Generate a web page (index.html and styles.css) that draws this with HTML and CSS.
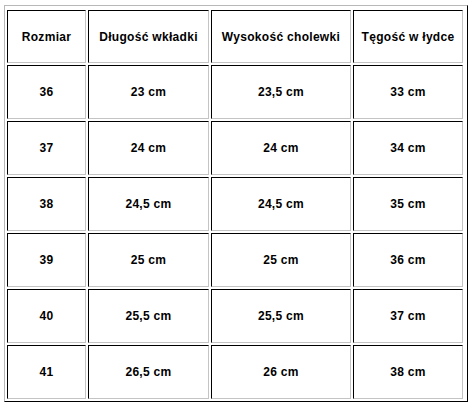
FILE: index.html
```html
<!DOCTYPE html>
<html lang="pl">
<head>
<meta charset="utf-8">
<title>Tabela rozmiarów</title>
<link rel="stylesheet" href="styles.css">
</head>
<body>
<table class="size-table">
  <thead>
    <tr class="head-row">
      <th class="c1">Rozmiar</th>
      <th class="c2">Długość wkładki</th>
      <th class="c3">Wysokość cholewki</th>
      <th class="c4">Tęgość w łydce</th>
    </tr>
  </thead>
  <tbody>
    <tr><td>36</td><td>23 cm</td><td>23,5 cm</td><td>33 cm</td></tr>
    <tr><td>37</td><td>24 cm</td><td>24 cm</td><td>34 cm</td></tr>
    <tr><td>38</td><td>24,5 cm</td><td>24,5 cm</td><td>35 cm</td></tr>
    <tr><td>39</td><td>25 cm</td><td>25 cm</td><td>36 cm</td></tr>
    <tr><td>40</td><td>25,5 cm</td><td>25,5 cm</td><td>37 cm</td></tr>
    <tr><td>41</td><td>26,5 cm</td><td>26 cm</td><td>38 cm</td></tr>
  </tbody>
</table>
</body>
</html>
```

FILE: styles.css
```css
html, body {
  margin: 0;
  padding: 0;
  background: #ffffff;
}

body {
  font-family: "Liberation Sans", Arial, sans-serif;
  font-size: 12px;
  font-weight: bold;
  color: #000000;
}

.size-table {
  margin: 5px 0 0 4px;
  border-collapse: separate;
  border-spacing: 2px;
  padding: 2px 2px 0 0;
  border-style: solid;
  border-width: 1px;
  border-color: #b8b8b8 #000000 #000000 #b8b8b8;
  table-layout: fixed;
}

.size-table th,
.size-table td {
  box-sizing: border-box;
  padding: 0;
  text-align: center;
  vertical-align: middle;
  font-weight: bold;
  letter-spacing: 0.3px;
  border-style: solid;
  border-width: 1px;
  border-color: #000000 #c4c4c4 #c4c4c4 #000000;
  height: 54px;
}

.size-table th {
  height: 53px;
}

.c1 { width: 79px; }
.c2 { width: 121px; }
.c3 { width: 140px; }
.c4 { width: 110px; }
```
